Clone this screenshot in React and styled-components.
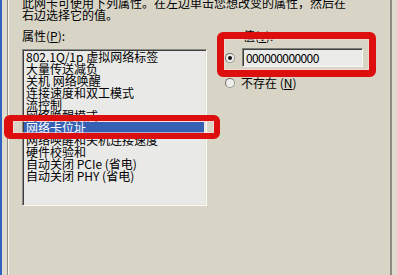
import React from 'react';
import styled, { createGlobalStyle } from 'styled-components';

const GlobalStyle = createGlobalStyle`
  html, body {
    margin: 0;
    padding: 0;
    background: #d8d5c7;
  }
  body {
    font-family: "Noto Sans CJK SC", "Noto Sans", sans-serif;
  }
`;

const Screen = styled.div`
  position: relative;
  width: 397px;
  height: 275px;
  overflow: hidden;
  display: flex;
  background: #d8d5c7;
  font-family: "Noto Sans CJK SC", "Noto Sans", sans-serif;
  font-size: 12px;
  color: #000;
`;

const WindowEdge = styled.div`
  width: 2px;
  flex-shrink: 0;
  background: #3063c0;
`;

const Gutter = styled.div`
  width: 5px;
  flex-shrink: 0;
  background: #dfdccf;
`;

const TabPage = styled.div`
  flex: 1;
  border-left: 1px solid #8e8e86;
  border-right: 2px solid #8b8a83;
  box-shadow: inset 1px 0 #f5f4ef;
  padding-left: 14px;
`;

const Description = styled.p`
  margin: -3px 0 0;
  line-height: 12px;
  white-space: nowrap;
`;

const Body = styled.div`
  display: grid;
  grid-template-columns: 185px 150px;
  column-gap: 18px;
  margin-top: 9px;
`;

const Column = styled.div`
  display: flex;
  flex-direction: column;
`;

const Label = styled.div`
  line-height: 12px;
  white-space: nowrap;
  padding-left: ${p => p.$indent || 0}px;

  u {
    text-decoration: underline;
  }
`;

const ListBox = styled.ul`
  margin: 7px 0 0;
  padding: 0;
  list-style: none;
  height: 157px;
  box-sizing: border-box;
  background: #e9e9e7;
  border-top: 1px solid #8a8a86;
  border-left: 1px solid #8a8a86;
  border-right: 1px solid #fbfbf8;
  border-bottom: 1px solid #fbfbf8;
  box-shadow: inset 1px 1px #3f3f3f, inset -1px -1px #e4e2d8;
  padding: 1px 2px 0 1px;
  overflow: hidden;
`;

const Item = styled.li`
  height: 11.9px;
  line-height: 12px;
  padding-left: 2px;
  white-space: nowrap;
  background: ${p => (p.$selected ? '#3560b4' : 'transparent')};
  color: ${p => (p.$selected ? '#fff' : '#000')};
`;

const ValueRow = styled.div`
  display: flex;
  align-items: center;
  gap: 7px;
  margin-top: 6px;
  height: 19px;
`;

const OptionRow = styled.div`
  display: flex;
  align-items: center;
  gap: 6px;
  margin-top: 9px;
  height: 14px;
  line-height: 12px;
`;

const Radio = styled.span`
  position: relative;
  width: 10px;
  height: 10px;
  flex-shrink: 0;
  box-sizing: border-box;
  border-radius: 50%;
  border: 1px solid #9a9a94;
  border-top-color: #6f6f6a;
  border-left-color: #6f6f6a;
  background: #eeeeec;

  &::after {
    content: '';
    display: ${p => (p.$checked ? 'block' : 'none')};
    position: absolute;
    left: 2px;
    top: 2px;
    width: 4px;
    height: 4px;
    border-radius: 50%;
    background: #111;
  }
`;

const ValueInput = styled.div`
  width: 121px;
  height: 19px;
  box-sizing: border-box;
  background: #ebebe9;
  border-top: 1px solid #7d7d78;
  border-left: 1px solid #7d7d78;
  border-right: 1px solid #f8f8f5;
  border-bottom: 1px solid #f8f8f5;
  box-shadow: inset 1px 1px #404040;
  padding: 1px 0 0 3px;
  line-height: 16px;
  letter-spacing: -0.6px;
  white-space: nowrap;
`;

const Annotation = styled.div`
  position: absolute;
  left: ${p => p.$x}px;
  top: ${p => p.$y}px;
  width: ${p => p.$w}px;
  height: ${p => p.$h}px;
  box-sizing: border-box;
  border: ${p => p.$stroke}px solid #dc0f0e;
  border-left-width: ${p => p.$left || p.$stroke}px;
  border-radius: 6px;
  box-shadow: inset 0 0 0 1px rgba(255, 220, 220, 0.6);
  pointer-events: none;
`;

const properties = [
  '802.1Q/1p 虚拟网络标签',
  '大量传送减负',
  '关机 网络唤醒',
  '连接速度和双工模式',
  '流控制',
  '网络唤醒模式',
  '网络卡位址',
  '网络唤醒和关机连接速度',
  '硬件校验和',
  '自动关闭 PCIe (省电)',
  '自动关闭 PHY (省电)',
];

const App = () => {
  const selected = '网络卡位址';

  return (
    <>
      <GlobalStyle />
      <Screen>
        <WindowEdge />
        <Gutter />
        <TabPage>
          <Description>
            此网卡可使用下列属性。在左边单击您想改变的属性，然后在
            <br />
            右边选择它的值。
          </Description>

          <Body>
            <Column>
              <Label>
                属性(<u>P</u>):
              </Label>
              <ListBox>
                {properties.map(name => (
                  <Item key={name} $selected={name === selected}>
                    {name}
                  </Item>
                ))}
              </ListBox>
            </Column>

            <Column>
              <Label $indent={18}>
                值(<u>V</u>):
              </Label>
              <ValueRow>
                <Radio $checked />
                <ValueInput>000000000000</ValueInput>
              </ValueRow>
              <OptionRow>
                <Radio />
                <span>
                  不存在 (<u>N</u>)
                </span>
              </OptionRow>
            </Column>
          </Body>
        </TabPage>
        <Gutter />

        <Annotation $x={4} $y={115} $w={216} $h={24} $stroke={6} $left={9} />
        <Annotation $x={217} $y={32} $w={159} $h={45} $stroke={7} />
      </Screen>
    </>
  );
};

export default App;
